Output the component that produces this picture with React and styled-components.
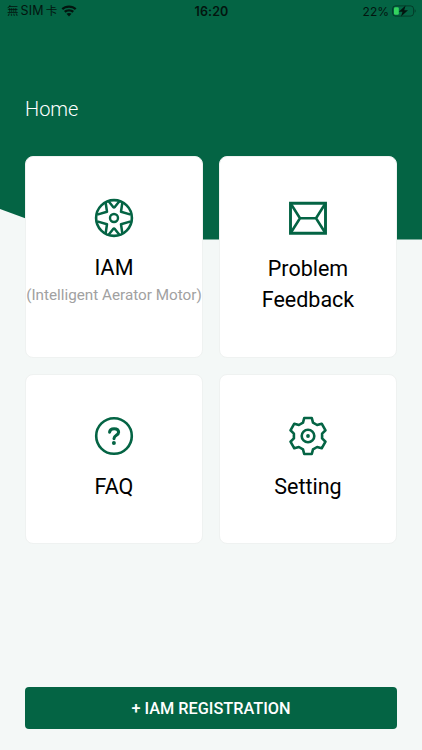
import styled, { createGlobalStyle } from 'styled-components'

const GlobalStyle = createGlobalStyle`
    * {
        box-sizing: border-box;
    }
    body {
        margin: 0;
        background-color: #f4f8f7;
        font-family: Roboto, "Liberation Sans", sans-serif;
    }
`

const green = '#046444'

const Container = styled.div`
    position: relative;
    isolation: isolate;
    display: flex;
    flex-direction: column;
    width: 422px;
    height: 750px;
    overflow: hidden;
    background-color: #f4f8f7;
`

const Backdrop = styled.div`
    position: absolute;
    z-index: -1;
    top: 0;
    left: 0;
    width: 100%;
    height: 239.5px;
    background-color: ${green};
    clip-path: polygon(0 0, 100% 0, 100% 100%, 83px 100%, 0 209px);
`

const StatusBar = styled.div`
    display: grid;
    grid-template-columns: 1fr auto 1fr;
    align-items: center;
    height: 22px;
    padding: 0 6px 0 7px;
    font-family: Inter, "Noto Sans CJK TC", sans-serif;
    font-size: 12px;
    color: #03150f;
`

const Carrier = styled.div`
    display: flex;
    align-items: center;
    gap: 4px;
    height: 22px;
    line-height: 22px;
    white-space: nowrap;
`

const CarrierName = styled.div`
    display: flex;
    gap: 2px;
    font-size: 11.5px;
`

const CarrierSim = styled.span`
    font-size: 12.5px;
    letter-spacing: 0.2px;
`

const Time = styled.div`
    font-weight: 600;
    font-size: 12.5px;
    letter-spacing: 0.1px;
`

const Power = styled.div`
    display: flex;
    align-items: center;
    justify-content: flex-end;
    gap: 3px;
    font-size: 12px;
`

const Title = styled.h1`
    margin: 74px 0 0 25px;
    height: 60px;
    font-family: "Roboto Light", Roboto, sans-serif;
    font-size: 20px;
    line-height: 27px;
    font-weight: 300;
    color: #fff;
`

const Menu = styled.div`
    display: grid;
    grid-template-columns: 1fr 1fr;
    grid-template-rows: 202px 170px;
    gap: 16px;
    padding: 0 25px;
`

const Card = styled.div`
    display: flex;
    flex-direction: column;
    align-items: center;
    padding-top: 40.5px;
    background-color: #fff;
    border: 1px solid #eff2f1;
    border-radius: 8px;

    &:nth-child(n + 3) {
        padding-top: 41.3px;
    }
`

const Icon = styled.svg`
    flex: none;
    width: 40px;
    height: 40px;
    fill: none;
    stroke: ${green};
    stroke-width: 2.6;
`

const CardTitle = styled.div`
    margin-top: ${(props) => props.$hasNote ? "14.4px" : "15px"};
    width: 120px;
    font-size: 21.5px;
    line-height: 31.5px;
    text-align: center;
    color: #000;
`

const CardNote = styled.div`
    margin-top: 1.6px;
    font-size: 15.25px;
    line-height: 20px;
    white-space: nowrap;
    color: #a1a1a1;
`

const Button = styled.button`
    height: 42px;
    margin: auto 25px 20.7px;
    padding: 0;
    border: none;
    border-radius: 4px;
    background-color: ${green};
    color: white;
    font-family: inherit;
    font-size: 16.3px;
    font-weight: 500;
    cursor: pointer;
`

const WifiIcon = () => (
    <svg width="16" height="12" viewBox="0 0 16 12" fill="#03150f">
        <path d="M8 0.4C5 0.4 2.4 1.5 0.5 3.3L2.1 5C3.6 3.6 5.7 2.7 8 2.7s4.4.9 5.9 2.3l1.6-1.7C13.6 1.5 11 .4 8 .4z" />
        <path d="M8 4.2c-2 0-3.7.7-5 1.9l1.6 1.7C5.5 7 6.7 6.5 8 6.5s2.5.5 3.4 1.3L13 6.1C11.7 4.9 10 4.2 8 4.2z" />
        <path d="M8 7.9c-1 0-1.8.3-2.5.9L8 11.5l2.5-2.7C9.8 8.2 9 7.9 8 7.9z" />
    </svg>
)

const BatteryIcon = () => (
    <svg width="24" height="12" viewBox="0 0 24 12">
        <rect x="0.6" y="0.9" width="21" height="10.2" rx="3" fill="none" stroke="#03150f" strokeOpacity="0.5" />
        <rect x="2" y="2.3" width="4.8" height="7.4" rx="1.3" fill="#34d35f" />
        <path d="M13.6 0.5L6.8 6.8H10.5L9 11.5L16 5.2H12.2z" fill="#03150f" />
        <path d="M22.7 4.3c1.3.5 1.3 2.9 0 3.4z" fill="#03150f" fillOpacity="0.5" />
    </svg>
)

const MotorIcon = () => (
    <Icon viewBox="-20 -20 40 40" strokeLinejoin="round">
        <circle r="17.9" />
        <circle r="4" strokeWidth="2.4" />
        <g strokeWidth="2.5">
            <path d="M-5.2 -16.5L-1 -11.2Q0 -10.2 1 -11.2L5.2 -16.5" />
            <path d="M-5.2 16.5L-1 11.2Q0 10.2 1 11.2L5.2 16.5" />
            <path d="M-16.8 -3.4L-7 -6.3L-8.4 -15.8" />
            <path d="M16.8 -3.4L7 -6.3L8.4 -15.8" />
            <path d="M-16.8 3.4L-7 6.3L-8.4 15.8" />
            <path d="M16.8 3.4L7 6.3L8.4 15.8" />
        </g>
    </Icon>
)

const MailIcon = () => (
    <Icon viewBox="0 0 40 40">
        <path d="M2.5 5.2H37.5V35.2H2.5z" strokeWidth="2.9" />
        <path d="M2.5 5.2L12 20.3L2.5 35.2M37.5 5.2L28 20.3L37.5 35.2M12 20.3H28" />
    </Icon>
)

const QuestionIcon = () => (
    <Icon viewBox="0 0 40 40">
        <circle cx="20" cy="20" r="17.8" />
        <path d="M15.6 16.2C15.8 13.8 17.5 12.7 20.1 12.7C22.9 12.7 24.6 14.2 24.6 16.3C24.6 19.4 20 19.3 20 22.6" strokeWidth="3.1" strokeLinecap="round" />
        <circle cx="19.9" cy="26.9" r="2" fill={green} stroke="none" />
    </Icon>
)

const GearIcon = () => (
    <Icon viewBox="-20 -20 40 40" strokeLinejoin="round">
        <path d="M-3.8 -18H3.8L5 -13.4L9.1 -11L13.7 -12.3L17.5 -5.7L14.1 -2.4V2.4L17.5 5.7L13.7 12.3L9.1 11L5 13.4L3.8 18H-3.8L-5 13.4L-9.1 11L-13.7 12.3L-17.5 5.7L-14.1 2.4V-2.4L-17.5 -5.7L-13.7 -12.3L-9.1 -11L-5 -13.4z" />
        <circle r="6.3" />
        <circle r="1.9" fill={green} stroke="none" />
    </Icon>
)

const items = [
    { title: "IAM", note: "(Intelligent Aerator Motor)", icon: MotorIcon },
    { title: "Problem Feedback", icon: MailIcon },
    { title: "FAQ", icon: QuestionIcon },
    { title: "Setting", icon: GearIcon },
]

const App = () => {
    return (
        <Container>
            <GlobalStyle />
            <Backdrop />
            <StatusBar>
                <Carrier>
                    <CarrierName>無<CarrierSim>SIM</CarrierSim>卡</CarrierName>
                    <WifiIcon />
                </Carrier>
                <Time>16:20</Time>
                <Power>22% <BatteryIcon /></Power>
            </StatusBar>
            <Title>Home</Title>
            <Menu>
                {items.map((item) => (
                    <Card key={item.title}>
                        <item.icon />
                        <CardTitle $hasNote={!!item.note}>{item.title}</CardTitle>
                        {item.note && <CardNote>{item.note}</CardNote>}
                    </Card>
                ))}
            </Menu>
            <Button>+ IAM REGISTRATION</Button>
        </Container>
    )
}

export default App
